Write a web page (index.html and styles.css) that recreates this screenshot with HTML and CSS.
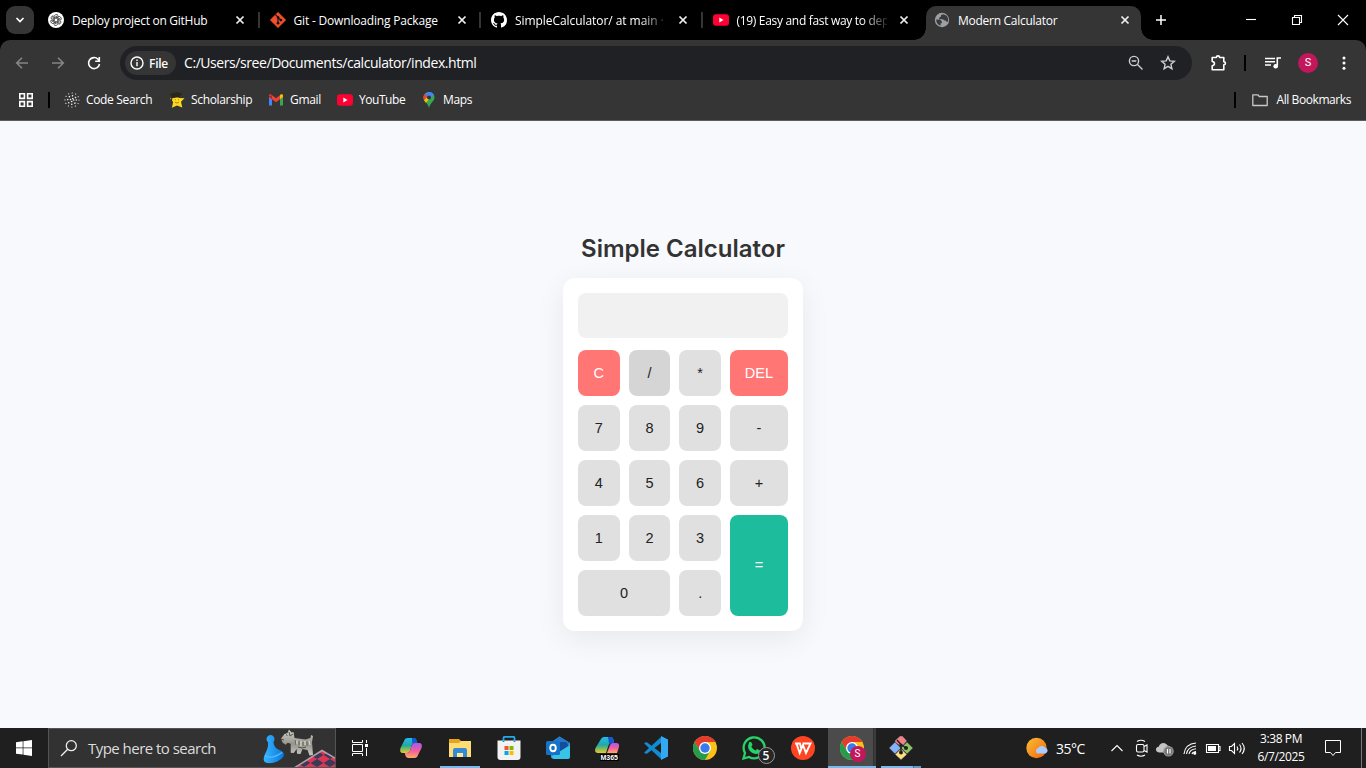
FILE: index.html
```html
<!DOCTYPE html>
<html lang="en">
<head>
<meta charset="utf-8">
<title>Modern Calculator</title>
<link rel="stylesheet" href="styles.css">
</head>
<body>
<header class="browser">
  <div class="tabs">
    <button class="tab-menu"><svg width="10" height="10" viewBox="0 0 10 10"><path d="M1.500 3l3.500 3.500L8.500 3" fill="none" stroke="#fff" stroke-width="1.700"/></svg></button>
    <div class="tab">
      <svg width="16" height="16" viewBox="0 0 16 16"><circle cx="8" cy="8" r="8" fill="#fff"/><g fill="none" stroke="#333" stroke-width=".8"><path id="petal" d="M6.200 9.200V4.800a2.200 2.200 0 0 1 4.100-1.200M6.200 5.700L9.800 3.700"/><use href="#petal" transform="rotate(60 8 8)"/><use href="#petal" transform="rotate(120 8 8)"/><use href="#petal" transform="rotate(180 8 8)"/><use href="#petal" transform="rotate(240 8 8)"/><use href="#petal" transform="rotate(300 8 8)"/></g></svg>
      <span class="tab-title">Deploy project on GitHub</span>
      <svg class="close" width="10" height="10" viewBox="0 0 10 10"><path d="M1.500 1.500l7 7M8.500 1.500l-7 7"/></svg>
    </div>
    <div class="tab">
      <svg width="16" height="16" viewBox="0 0 16 16"><path d="M8 .2L15.800 8 8 15.800.2 8z" fill="#f34f29" stroke="#f34f29" stroke-linejoin="round" stroke-width=".5"/><path d="M5.500 2.700L8 5.200v6M8 5.300l2.800 2.800" fill="none" stroke="#161010" stroke-width="1.200"/><g fill="#161010"><circle cx="8" cy="5.200" r="1.300"/><circle cx="8" cy="11.200" r="1.400"/><circle cx="10.900" cy="8.100" r="1.400"/></g></svg>
      <span class="tab-title t2">Git - Downloading Package</span>
      <svg class="close" width="10" height="10" viewBox="0 0 10 10"><path d="M1.500 1.500l7 7M8.500 1.500l-7 7"/></svg>
    </div>
    <div class="tab">
      <svg width="16" height="16" viewBox="0 0 16 16"><path fill="#fff" d="M8 0C3.580 0 0 3.580 0 8c0 3.540 2.290 6.530 5.470 7.590.4.070.55-.17.55-.38 0-.19-.01-.82-.01-1.490-2.010.37-2.530-.49-2.690-.94-.09-.23-.48-.94-.82-1.130-.28-.15-.68-.52-.01-.53.63-.01 1.080.58 1.230.82.72 1.210 1.870.87 2.330.66.070-.52.28-.87.51-1.070-1.780-.2-3.640-.89-3.640-3.950 0-.87.31-1.590.82-2.150-.08-.2-.36-1.020.08-2.120 0 0 .67-.21 2.200.82.64-.18 1.320-.27 2-.27s1.360.09 2 .27c1.530-1.040 2.200-.82 2.200-.82.44 1.100.16 1.920.08 2.120.51.56.82 1.270.82 2.150 0 3.070-1.870 3.750-3.650 3.950.29.25.54.73.54 1.480 0 1.070-.01 1.930-.01 2.200 0 .21.15.46.55.38A8.010 8.010 0 0016 8c0-4.420-3.580-8-8-8z"/></svg>
      <span class="tab-title t3 fade">SimpleCalculator/ at main · S</span>
      <svg class="close" width="10" height="10" viewBox="0 0 10 10"><path d="M1.500 1.500l7 7M8.500 1.500l-7 7"/></svg>
    </div>
    <div class="tab last">
      <svg width="16" height="16" viewBox="0 0 16 16"><rect y="2.300" width="16" height="11.400" rx="3" fill="#ff0033"/><path d="M6.300 5.500L10.600 8l-4.300 2.500z" fill="#fff"/></svg>
      <span class="tab-title t4 fade">(19) Easy and fast way to dep</span>
      <svg class="close" width="10" height="10" viewBox="0 0 10 10"><path d="M1.500 1.500l7 7M8.500 1.500l-7 7"/></svg>
    </div>
    <div class="tab active">
      <svg width="16" height="16" viewBox="0 0 16 16"><circle cx="8" cy="8" r="7.200" fill="#9aa0a6"/><path d="M9.300 2.200L7 3v1.600L5.200 5.700v1.500h3.700l1.400 1.300h1.500l.6 1.200h1.700C14.700 5.500 13 3 9.300 2.200zM2.300 7.500l4 .3 1.500 1.700v1.700H6.500l.2 2.500C4 13 2 10.500 2.300 7.500z" fill="#3a3a3a"/></svg>
      <span class="tab-title t5">Modern Calculator</span>
      <svg class="close" width="10" height="10" viewBox="0 0 10 10"><path d="M1.500 1.500l7 7M8.500 1.500l-7 7"/></svg>
    </div>
    <svg class="plus" width="12" height="12" viewBox="0 0 12 12"><path d="M6 1v10M1 6h10" stroke="#fff" stroke-width="1.500"/></svg>
    <div class="window-controls">
      <svg width="12" height="12" viewBox="0 0 12 12"><path d="M1 5.500h10"/></svg>
      <svg width="12" height="12" viewBox="0 0 12 12"><path d="M1.500 3.500h7v7h-7zM3.500 3.500v-2h7v7h-2"/></svg>
      <svg width="12" height="12" viewBox="0 0 12 12"><path d="M1 1l10 10M11 1L1 11"/></svg>
    </div>
  </div>
  <div class="chrome">
    <div class="toolbar">
      <svg class="nav dim" width="16" height="16" viewBox="0 0 16 16"><path d="M14 8H3M8 2.700L2.700 8 8 13.300"/></svg>
      <svg class="nav dim" width="16" height="16" viewBox="0 0 16 16"><path d="M2 8h11M8 2.700L13.300 8 8 13.300"/></svg>
      <svg class="nav" width="16" height="16" viewBox="0 0 16 16"><path d="M13.500 9A5.500 5.500 0 1 1 12 4.200L13.200 5.500M13.300 2v4.200H9.200"/></svg>
      <div class="address">
        <div class="chip"><svg width="14" height="14" viewBox="0 0 14 14"><circle cx="7" cy="7" r="6" fill="none" stroke="#fff" stroke-width="1.400"/><path d="M7 6v4.200M7 3.600V5" stroke="#fff" stroke-width="1.400"/></svg><span>File</span></div>
        <span class="url">C:/Users/sree/Documents/calculator/index.html</span>
        <svg class="zoom" width="16" height="16" viewBox="0 0 16 16"><path d="M9.500 9.500L14.500 14.500M3.700 6h4.600" /><circle cx="6" cy="6" r="4.600"/></svg>
        <svg class="star" width="16" height="16" viewBox="0 0 16 16"><path d="M8 1.800l1.800 4.100 4.500.4-3.400 3 1 4.400L8 11.400l-3.900 2.300 1-4.400-3.400-3 4.500-.4z"/></svg>
      </div>
      <svg class="puzzle" width="18" height="18" viewBox="0 0 18 18"><path d="M2.200 3.500h4.200C6.400 1.300 9.600 1.300 9.600 3.500h4.200v4.200c2.200 0 2.200 3 0 3v5H2.200v-4c3-.2 3-4 0-4.200z" fill="none" stroke="#fff" stroke-width="1.600" stroke-linejoin="round"/></svg>
      <i class="divider d1"></i>
      <svg class="music" width="16" height="14" viewBox="0 0 16 14"><path d="M0 2.500h10M0 5.700h10M0 9h6M12.300 9.500V2H16" stroke="#fff" stroke-width="1.600" fill="none"/><circle cx="10.700" cy="10.300" r="2.300" fill="#fff"/></svg>
      <span class="avatar">S</span>
      <svg class="dots" width="4" height="16" viewBox="0 0 4 16"><g fill="#fff"><circle cx="2" cy="3" r="1.500"/><circle cx="2" cy="8" r="1.500"/><circle cx="2" cy="13.300" r="1.500"/></g></svg>
    </div>
    <div class="bookmarks">
      <svg class="apps" width="14" height="14" viewBox="0 0 14 14"><path d="M.8.8h4.600v4.600H.8zM8.600.8h4.600v4.600H8.600zM.8 8.600h4.600v4.600H.8zM8.600 8.600h4.600v4.600H8.600z" fill="none" stroke="#fff" stroke-width="1.600"/></svg>
      <i class="divider d2"></i>
      <div class="bm b1"><svg width="16" height="16" viewBox="0 0 16 16"><g fill="none" stroke="#eee" stroke-linecap="round"><circle cx="8" cy="8" r="1.600" stroke-width="1.500" stroke-dasharray=".1 2.400"/><circle cx="8" cy="8" r="4.300" stroke-width="1.500" stroke-dasharray=".1 3.280"/><circle cx="8" cy="8" r="7" stroke-width="1.100" stroke-dasharray=".1 3.560"/></g></svg><span>Code Search</span></div>
      <div class="bm b2"><svg width="16" height="16" viewBox="0 0 16 16"><path d="M8 2.500l2 3.600 5.500.2-3.500 3.500 1.300 5.600L8 13.500l-5.100 2.200 1.300-5.600L1 6.300l5-.2z" fill="#ffd91f"/><path d="M.5 2.300L8 0l5.500 1.700-3.200 2.500v1.300H5L3.500 5 3 9H2l.5-5z" fill="#2b241b"/><path d="M6.500 7.300v1M9.500 7.300v1M6 10.300q2 1.500 4 0" stroke="#a88612" fill="none"/></svg><span>Scholarship</span></div>
      <div class="bm b3"><svg width="16" height="16" viewBox="0 0 16 16"><path d="M1 4v9.500h3V7z" fill="#4285f4"/><path d="M12 7v6.500h3V4z" fill="#34a853"/><path d="M1 3.500C1 2 2.500 1.800 3.500 2.700L8 6.200l4.500-3.500C13.500 1.800 15 2 15 3.500V5l-7 5.300L1 5z" fill="#ea4335"/><path d="M12 3.100c1.500-1.300 3-.8 3 .7V5l-3 2.200z" fill="#fbbc04"/><path d="M1 4l3-.8v4L1 5z" fill="#c5221f"/></svg><span>Gmail</span></div>
      <div class="bm b4"><svg width="16" height="16" viewBox="0 0 16 16"><rect y="2.300" width="16" height="11.400" rx="3" fill="#ff0033"/><path d="M6.300 5.500L10.600 8l-4.300 2.500z" fill="#fff"/></svg><span>YouTube</span></div>
      <div class="bm b5"><svg width="16" height="16" viewBox="0 0 16 16"><path d="M8 0a5.500 5.500 0 0 1 5.500 5.500C13.500 9 9 11 8 16 7 11 2.500 9 2.500 5.500A5.500 5.500 0 0 1 8 0z" fill="#34a853"/><path d="M3.800 2A5.500 5.500 0 0 1 13 3.200L8 7.500z" fill="#4285f4"/><path d="M3.800 2L6.500 4.300 3 8.300A5.500 5.500 0 0 1 3.800 2z" fill="#ea4335"/><path d="M3 8.300L8 3.500v4L4.800 10.800z" fill="#fbbc04"/><circle cx="8" cy="5.500" r="2" fill="#333"/></svg><span>Maps</span></div>
      <i class="divider d3"></i>
      <div class="bm b6"><svg width="16" height="14" viewBox="0 0 16 14"><path d="M.8 1.800h5l1.500 1.700h7.900v9H.8z" fill="none" stroke="#c7c7c7" stroke-width="1.300" stroke-linejoin="round"/></svg><span>All Bookmarks</span></div>
    </div>
  </div>
</header>

<main class="page">
  <h1>Simple Calculator</h1>
  <section class="calculator">
    <div class="display"></div>
    <div class="keys">
      <button class="red">C</button><button class="hover">/</button><button>*</button><button class="red">DEL</button>
      <button>7</button><button>8</button><button>9</button><button>-</button>
      <button>4</button><button>5</button><button>6</button><button>+</button>
      <button>1</button><button>2</button><button>3</button><button class="equals">=</button>
      <button class="zero">0</button><button>.</button>
    </div>
  </section>
</main>

<footer class="taskbar">
  <div class="start"><svg width="16" height="16" viewBox="0 0 16 16"><path d="M0 2.300L6.700 1.300V7.600H0zM7.400 1.200L16 0v7.600H7.400zM0 8.300h6.700v6.300L0 13.700zM7.400 8.300H16V16l-8.600-1.200z" fill="#fff"/></svg></div>
  <div class="search">
    <svg width="18" height="18" viewBox="0 0 18 18"><circle cx="11.300" cy="6.700" r="5" fill="none" stroke="#eee" stroke-width="1.300"/><path d="M7.700 10.300L1 17" stroke="#eee" stroke-width="1.300"/></svg>
    <span>Type here to search</span>
    <svg class="games" width="74" height="38" viewBox="0 0 74 38"><defs><linearGradient id="blue"><stop stop-color="#39b5ff"/><stop offset="1" stop-color="#0878dc"/></linearGradient><linearGradient id="fur" x2="0" y2="1"><stop stop-color="#d2d1ca"/><stop offset=".55" stop-color="#96958d"/><stop offset="1" stop-color="#c9c8c0"/></linearGradient><pattern id="check" width="16" height="16" patternUnits="userSpaceOnUse" patternTransform="matrix(.82 -.5 .8 .5 30 38)"><rect width="16" height="16" fill="#393b58"/><path d="M0 0h8v8H0zM8 8h8v8H8z" fill="#dd3653"/></pattern></defs>
      <path d="M34 39L61 21.500 74 29v10z" fill="url(#check)"/><path d="M34 38.500L61 21.500 74 29" fill="none" stroke="#b79cad" stroke-width="1.500"/>
      <path d="M7 13.200a4 4 0 1 1 5.500-.4c.2 4.500 2.500 7 7 8.700 6 2.500 4 8.500-5.500 11.700-6 2-11.500 1-11.300-3.200C2.900 25 8 20 7 13.200z" fill="url(#blue)"/><path d="M4 26.500c5 4 13 0 17-3" fill="none" stroke="#52bcff" stroke-width="1.300"/>
      <path d="M20 9.500l3.500-4.500 3-1 1.500-3.500 2.500 3 2-.5 1 6 11 1.500 5-1.500.5-3 2 1-1 6 1 13-3.500.5-2-5.500-5-1-2 5-3.500-.3-.3-4.700-3 4-3-.3v-9l-3-1-2 2-3-2z" fill="url(#fur)"/><path d="M25 5.500l1.500 1M20 10l3 1M28 3l1 4 3-2M37 18l4 1 4-1" stroke="#4e4f49" fill="none"/><path d="M34 11l1 5M38 12v4M42 13v4M46 12v5" stroke="#65665f"/><path d="M36 11.500v4M40 12v5M44 12v4M48 12l1 4" stroke="#e1e0db"/>
    </svg>
  </div>
  <div class="task taskview"><svg width="18" height="18" viewBox="0 0 18 18"><path d="M1.500 1v2.500h10V1M1.500 17v-2.500h10V17M1.500 5.500v7h10v-7zM15.500 1v3M15.500 9v8" fill="none" stroke="#fff"/><rect x="14" y="5" width="3" height="3" fill="#fff"/></svg></div>
  <div class="apps-row">
    <div class="task"><svg width="24" height="24" viewBox="0 0 24 24"><defs><linearGradient id="ca" x2="0" y2="1"><stop stop-color="#22b9f7"/><stop offset=".5" stop-color="#22a9a0"/><stop offset="1" stop-color="#e8cb20"/></linearGradient><linearGradient id="cb" x2="0" y2="1"><stop stop-color="#a25cf0"/><stop offset=".5" stop-color="#f45ba0"/><stop offset="1" stop-color="#ffac65"/></linearGradient></defs><path d="M6 3q1-1 3-1h6q2 0 2.800 3l.5 2h-3q-2 0-2.700 2.500L11 15q-.8 2-3 2H4q-4 0-2.500-5z" fill="url(#ca)"/><path d="M13 2h2q2 0 2.800 3l.5 2h-3l-2 1z" fill="#1258ce"/><path d="M18 21q-1 1-3 1H9q-2 0-2.800-3l-.5-2h2.500q2 0 2.800-2.500L13 9q.7-2 3-2h4q4 0 2.500 5z" fill="url(#cb)"/></svg></div>
    <div class="task open"><svg width="24" height="24" viewBox="0 0 24 24"><path d="M1 3h10l2 2h10v15H1z" fill="#e3a51b"/><path d="M1 7L11 7l2-2h10v16H1z" fill="#ffdc74"/><path d="M5 14q0-2 2-2h10q2 0 2 2v7h-4v-4H9v4H5z" fill="#348bd4"/><path d="M9 17h6v4H9z" fill="#ffe79a"/></svg></div>
    <div class="task"><svg width="24" height="24" viewBox="0 0 24 24"><path d="M6.500 6V2q0-1.200 1.200-1.200h8.600q1.200 0 1.200 1.200v4" fill="none" stroke="#24aae5" stroke-width="1.800"/><path d="M.5 4.500h23v16.500q0 3-3 3h-17q-3 0-3-3z" fill="#f2f2f1"/><path d="M6.500 4.500V6M17.500 4.500V6" stroke="#168bcf" stroke-width="1.800"/><path fill="#f35426" d="M7.500 10h4v4h-4z"/><path fill="#7fba00" d="M12.500 10h4v4h-4z"/><path fill="#05a6f0" d="M7.500 15h4v4h-4z"/><path fill="#ffba08" d="M12.500 15h4v4h-4z"/></svg></div>
    <div class="task"><svg width="24" height="24" viewBox="0 0 24 24"><path d="M4 7l9.500-6.500L24 7v14q0 2-2 2H8q-3 0-3-3z" fill="#3598df"/><path d="M13.500.5L24 7 12 15 5 7z" fill="#2677c9"/><path d="M14 6h6l3 4-10 7z" fill="#134d9c"/><path d="M5 21l19-12v11q0 3-3 3H8z" fill="#38c4e8"/><rect y="5" width="14" height="14" rx="1.500" fill="#1373c7"/><ellipse cx="7" cy="12" rx="2.800" ry="3.300" fill="none" stroke="#fff" stroke-width="1.900"/></svg></div>
    <div class="task m365"><svg width="24" height="24" viewBox="0 0 24 24"><path d="M6 3q1-2 3-2h7q2 0 2.600 3l.5 3h-3q-2 0-2.700 2.500L11 17H3q-4 0-2.500-5z" fill="url(#ca)"/><path d="M13 1h3q2 0 2.600 3l.5 3h-3l-2 1z" fill="#1258ce"/><path d="M12 17l3-8q.7-2 3-2h3q4 0 3 4l-2 6z" fill="url(#cb)"/></svg><b>M365</b></div>
    <div class="task"><svg width="24" height="24" viewBox="0 0 24 24"><path d="M17 1L7.500 9.800 2.500 6 0 7.300 5 12 0 16.700 2.500 18l5-3.800L17 23l7-3V4zM17 7v10l-6.500-5z" fill="#118bd2" fill-rule="evenodd"/><path d="M17 0l7 3.500v17L17 24z" fill="#32a9f2"/></svg></div>
    <div class="task"><svg width="24" height="24" viewBox="0 0 24 24"><circle cx="12" cy="12" r="12" fill="#fbc116"/><path d="M1.600 6A12 12 0 0 1 22.400 6H12L7 15z" fill="#e33b2e"/><path d="M1.600 6A12 12 0 0 0 12 24l5-9-10-.1z" fill="#269b4e"/><circle cx="12" cy="12" r="6" fill="#fff"/><circle cx="12" cy="12" r="4.700" fill="#397bed"/></svg></div>
    <div class="task"><svg width="24" height="24" viewBox="0 0 24 24"><path d="M1.500 22.500L3 17a10.500 10.500 0 1 1 4 4z" fill="none" stroke="#25d366" stroke-width="2.300"/><path d="M7 6.500q1-1.500 2.500 0l1 2.500-1.200 1.600q1.200 2.800 4.200 4l1.600-1.700 2.900 1.600q0 3.500-4 3.500-5-.5-7.500-5Q5.500 9.500 7 6.500z" fill="#25d366"/></svg><span class="badge">5</span></div>
    <div class="task"><svg width="24" height="24" viewBox="0 0 24 24"><circle cx="12" cy="12" r="12" fill="#ff4422"/><path d="M4 7.500h5l1.500 6M5.500 7.500L8.700 17l3.300-8 3 8 4.500-9.500h-8" fill="none" stroke="#fff" stroke-width="1.900"/></svg></div>
    <div class="task current"><svg width="24" height="24" viewBox="0 0 24 24"><circle cx="12" cy="12" r="12" fill="#fbc116"/><path d="M1.600 6A12 12 0 0 1 22.400 6H12L7 15z" fill="#e33b2e"/><path d="M1.600 6A12 12 0 0 0 12 24l5-9-10-.1z" fill="#269b4e"/><circle cx="12" cy="12" r="6" fill="#fff"/><circle cx="12" cy="12" r="4.700" fill="#397bed"/></svg><span class="profile">S</span></div>
    <div class="task open git"><svg width="24" height="24" viewBox="0 0 24 24"><g stroke="#c8c8c8" stroke-width=".4" stroke-linejoin="round"><path d="M11 .5h2.500L17.500 5l-5 5.500-6-4.500V4.500z" fill="#f57f83"/><path d="M18 6.500l5.500 5.500-5.500 5.500L12.500 12z" fill="#8cc65f"/><path d="M6 6.500l5.500 5.500L6 17.500.5 12z" fill="#82b3ff"/><path d="M12 13l5.500 5.500L12 23.500l-5.500-5z" fill="#ffe17c"/></g><path d="M8 4l4 4.500V16M12 8.500l5 3.500" stroke="#201f22" stroke-width="1.400" fill="none"/><g fill="#201f22"><circle cx="12" cy="9" r="1.600"/><circle cx="12" cy="16.500" r="2"/><circle cx="17" cy="12" r="2"/></g></svg></div>
  </div>
  <div class="weather"><svg width="24" height="22" viewBox="0 0 24 22"><defs><linearGradient id="sun" x2="1" y2="1"><stop stop-color="#f9bf35"/><stop offset="1" stop-color="#f3650f"/></linearGradient></defs><circle cx="10.500" cy="11" r="10.200" fill="url(#sun)"/><path d="M11 16.500a3 3 0 0 1 1-5.200 4.300 4.300 0 0 1 7.500-.2c2.200.2 3.300 4.200 0 5.400z" fill="#aacbff"/></svg><span>35°C</span></div>
  <div class="tray">
    <svg width="24" height="20" viewBox="0 0 24 20"><path d="M6.500 13L12 7.500l5.500 5.500"/></svg>
    <svg width="24" height="20" viewBox="0 0 24 20"><rect x="7.500" y="6.500" width="7.500" height="7.500" rx="1.500"/><path d="M15 8.500l3-1.500v7l-3-1.500M8 3.500q4-2.500 8 0M8 17q4 2.500 8 0"/></svg>
    <svg width="24" height="20" viewBox="0 0 24 20"><path class="cloud" d="M6 14.500c-4-.5-4-5.500-.3-5.700 1-4.500 7-5.300 8.800-1.300 3 .2 4 3.500 2.500 7z"/><circle class="pause" cx="15.500" cy="13.300" r="4.700"/><path d="M14.500 11v4.500M17 11v4.500"/></svg>
    <svg width="24" height="20" viewBox="0 0 24 20"><path d="M7 16Q8 6 19 5M9.500 16q1-7 9.500-8M12 16q.8-4.500 7-5.200M15 16q.5-2 4-2.500"/><circle cx="17.800" cy="15.300" r="1" fill="#fff"/></svg>
    <svg width="24" height="20" viewBox="0 0 24 20"><path d="M5.500 6.500h12v8h-12zM18 8.500h1v4h-1"/><path d="M7 8h8v5H7z" fill="#fff" stroke="none"/></svg>
    <svg width="24" height="20" viewBox="0 0 24 20"><path d="M4.500 8.500h2l3-3v10l-3-3h-2zM12 8.500q1.500 2 0 4M14.500 6.500q3 4 0 8M17 5q4.500 5.500 0 11"/></svg>
  </div>
  <div class="clock"><span>3:38 PM</span><span>6/7/2025</span></div>
  <svg class="notice" width="18" height="18" viewBox="0 0 18 18"><path d="M1.500 1.500h15v12h-5l-2.500 3-2.500-3h-5z" fill="none" stroke="#fff"/></svg>
</footer>
</body>
</html>
```
FILE: styles.css
```css
* { box-sizing: border-box; }
body { margin: 0; width: 1366px; height: 768px; overflow: hidden; display: flex; flex-direction: column; background: #f8f9fd; font: 12px "Open Sans", "Noto Sans", sans-serif; }
svg { display: block; flex: none; }
button { border: 0; padding: 0; margin: 0; }
.browser { height: 121px; background: #000; color: #fff; flex: none; }
.tabs { display: flex; height: 40px; padding-left: 6px; }
.tab-menu { width: 28px; height: 28px; margin: 6px 4px 0 0; border-radius: 9px; background: #353535; display: grid; place-items: center; }
.tab { width: 221.500px; height: 40px; padding: 0 13px 0 10px; display: flex; align-items: center; flex: none; position: relative; }
.tab:not(.active):not(.last)::after { content: ""; position: absolute; right: 0; top: 12px; width: 2px; height: 16px; background: #353535; }
.tab-title { margin-left: 8px; padding-top: 2px; width: 150px; white-space: nowrap; letter-spacing: -.27px; line-height: 20px; }
.t2 { letter-spacing: -.18px; }
.t3 { letter-spacing: -.06px; }
.t4 { letter-spacing: -.31px; }
.fade { mask-image: linear-gradient(90deg, #000 125px, transparent 154px); }
.close { margin-left: 13px; fill: none; stroke: #f2f2f2; stroke-width: 1.700; }
.last .close { margin-left: 12px; }
.tab.active { width: 215px; height: 34px; margin: 6px 0 0 2px; padding: 0 0 6px 8px; background: #353535; border-radius: 10px 10px 0 0; }
.tab.active .close { margin-left: 12px; }
.tab.active::before, .tab.active::after { content: ""; position: absolute; bottom: 0; width: 12px; height: 12px; }
.tab.active::before { left: -12px; background: radial-gradient(circle at 0 0, transparent 11.500px, #353535 12px); }
.tab.active::after { right: -12px; background: radial-gradient(circle at 100% 0, transparent 11.500px, #353535 12px); }
.plus { margin: 14px 0 0 14px; }
.window-controls { display: flex; gap: 34px; margin: 14px 17px 0 auto; fill: none; stroke: #fff; stroke-width: 1.100; }
.chrome { height: 81px; background: #353535; border-radius: 10px 10px 0 0; border-bottom: 1px solid #5c5c5c; }
.toolbar { height: 46px; padding: 0 20px 0 14px; display: flex; align-items: center; }
.nav { fill: none; stroke: #fff; stroke-width: 1.600; margin-right: 20px; }
.nav.dim { stroke: #858585; }
.nav:nth-child(3) { margin-right: 18px; }
.address { display: flex; align-items: center; width: 1072px; height: 34px; border-radius: 17px; padding: 0 16px 0 5px; background: #202124; }
.chip { width: 51px; height: 24px; border-radius: 12px; background: #353535; padding-left: 5px; display: flex; align-items: center; gap: 5px; font-weight: 600; letter-spacing: -.25px; }
.url { margin-left: 8px; font-size: 14px; letter-spacing: -.43px; line-height: 20px; }
.zoom, .star { fill: none; stroke: #cfcfcf; stroke-width: 1.400; }
.zoom { margin-left: auto; margin-right: 16px; }
.puzzle { margin-left: 18px; }
.divider { display: block; width: 2px; height: 16px; background: #000; flex: none; }
.d1 { margin-left: 16px; }
.music { margin-left: 19px; }
.avatar { width: 20px; height: 20px; border-radius: 50%; background: #c2185b; margin-left: 17px; font: 11px/20px Roboto, sans-serif; text-align: center; }
.dots { margin-left: auto; }
.bookmarks { display: flex; align-items: center; height: 28px; padding: 0 15px 0 19px; }
.d2 { margin: 0 14px 0 15px; }
.bm { display: flex; align-items: center; gap: 6px; width: 105px; flex: none; white-space: nowrap; letter-spacing: -.34px; }
.bm span { margin-bottom: 1px; }
.b2 { width: 99px; }
.b3 { width: 69px; }
.b4 { width: 84px; letter-spacing: -.45px; }
.b5 { width: 60px; }
.d3 { margin-left: auto; margin-right: 16px; }
.b6 { width: auto; gap: 8px; letter-spacing: -.42px; }
.page { flex: 1; display: flex; flex-direction: column; align-items: center; padding-top: 113px; }
h1 { margin: 0; font: 600 24px/30px Inter, sans-serif; color: #333; white-space: nowrap; }
.calculator { width: 240px; margin-top: 14px; padding: 15px; border-radius: 12px; background: #fff; box-shadow: 0 8px 30px rgba(0,0,0,.07); }
.display { height: 45px; border-radius: 8px; background: #f1f1f1; margin-bottom: 12px; }
.keys { display: grid; grid-template-columns: repeat(3, 41.670px) 58px; grid-auto-rows: 46px; gap: 9px; }
.keys button { border-radius: 8px; background: #e0e0e0; color: #222; font: 14.500px "Liberation Sans", Arial, sans-serif; }
.keys .red { background: #ff7675; color: #fff; }
.keys .hover { background: #d5d5d5; }
.keys .equals { grid-column: 4; grid-row: 4 / 6; padding-bottom: 2px; background: #1dbc9c; color: #fff; }
.keys .zero { grid-column: 1 / 3; grid-row: 5; }
.taskbar { height: 40px; flex: none; display: flex; background: #1f1f1f; color: #fff; }
.start { width: 48px; display: grid; place-items: center; }
.search { width: 288px; display: flex; align-items: center; border: 1px solid #555; background: #323232; padding-left: 11px; }
.search span { width: 136px; margin-left: 10px; font-size: 15px; letter-spacing: -.53px; color: #ddd; white-space: nowrap; }
.games { margin-left: auto; }
.task { width: 49px; height: 40px; display: grid; place-items: center; position: relative; flex: none; }
.taskview { width: 48px; }
.apps-row { display: flex; padding-left: 2.500px; }
.open::after, .current::after { content: ""; position: absolute; bottom: 0; left: 4px; width: 40px; height: 2px; background: #76b9ed; }
.current { background: linear-gradient(90deg, #4b4b4b 45px, #2a2a2a 45px, #3b3b3b 46px); width: 48px; }
.current::after { left: 0; width: 48px; }
.git { width: 50px; }
.git::after { background: linear-gradient(90deg, #76b9ed 32px, #4a7190 32px, #4a7190 33px, #5f9bc8 33px); left: 5px; }
.m365 b { position: absolute; left: 17px; top: 26px; padding: 0 1px; background: #000; font: 700 7px/7px "Liberation Sans", sans-serif; }
.badge { position: absolute; left: 28px; top: 19px; width: 17px; height: 17px; border: 1px solid #999; border-radius: 50%; background: #272727; text-align: center; line-height: 15px; font-size: 12px; font-weight: 600; }
.profile { position: absolute; left: 22px; top: 18px; width: 16px; height: 16px; border-radius: 50%; background: #c2185b; text-align: center; font: 10px/16px Roboto, sans-serif; }
.weather { display: flex; align-items: center; gap: 6px; margin-left: auto; width: 79px; font-size: 14px; letter-spacing: -.5px; }
.tray { display: flex; align-items: center; fill: none; stroke: #fff; stroke-width: 1.100; }
.tray .cloud { fill: #c4c4c4; stroke: none; }
.tray .pause { fill: #777; stroke: #999; }
.clock { width: 64px; display: flex; flex-direction: column; align-items: center; font-size: 12px; line-height: 18px; letter-spacing: -.4px; padding-top: 2px; }
.notice { margin: 11px 19px 0 11px; }
.taskbar::after { content: ""; width: 1px; background: #777; margin-right: 4px; }
```
